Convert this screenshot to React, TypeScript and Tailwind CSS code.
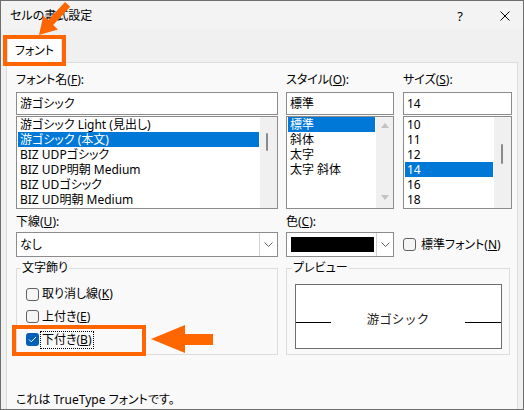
import type { ReactNode } from 'react';

const fontCls = "font-['Noto_Sans','Noto_Sans_CJK_JP',sans-serif] [font-feature-settings:'palt']";

function Chevron() {
  return (
    <svg width="9" height="5" viewBox="0 0 9 5" fill="none">
      <path d="M0.5 0.5 L4.5 4.5 L8.5 0.5" stroke="#606060" strokeWidth="1" />
    </svg>
  );
}

function ListBox({
  items,
  selected,
  bar,
}: {
  items: string[];
  selected: number;
  bar: ReactNode;
}) {
  return (
    <div className="mt-[1px] h-[93px] border border-[#8c8c8c] bg-white flex">
      <div className="flex-1 px-[1px] flex flex-col overflow-hidden">
        {items.map((t, i) => (
          <div
            key={t}
            className={`h-[15px] leading-[15px] px-[2px] whitespace-nowrap ${
              i === selected ? 'bg-[#0078d7] text-white' : ''
            }`}
          >
            {t}
          </div>
        ))}
      </div>
      {bar}
    </div>
  );
}

function CheckBox({ checked }: { checked?: boolean }) {
  if (checked) {
    return (
      <div className="w-[13px] h-[13px] rounded-[3px] bg-[#005fb8] flex items-center justify-center shrink-0">
        <svg width="9" height="7" viewBox="0 0 9 7" fill="none">
          <path d="M1 3.5 L3.3 5.8 L8 1" stroke="#ffffff" strokeWidth="1" />
        </svg>
      </div>
    );
  }
  return <div className="w-[13px] h-[13px] rounded-[3px] border border-[#616161] bg-[#f5f5f5] shrink-0" />;
}

export default function App() {
  return (
    <div
      className={`w-[524px] h-[410px] bg-[#f0f0f0] border border-[#6e6e6e] relative flex flex-col text-[12px] text-black overflow-hidden ${fontCls}`}
    >
      {/* タイトルバー */}
      <div className="h-[29px] bg-[#f3f3f3] flex items-center pl-[9px] pr-[13px]">
        <span className="leading-[16px]">セルの書式設定</span>
        <div className="ml-auto flex items-center gap-[37px]">
          <span className="leading-[16px] text-[13px]">?</span>
          <svg width="10" height="10" viewBox="0 0 10 10" fill="none">
            <path d="M0.5 0.5 L9.5 9.5 M9.5 0.5 L0.5 9.5" stroke="#000" strokeWidth="1" />
          </svg>
        </div>
      </div>

      {/* タブ */}
      <div className="h-[32px] flex items-end pl-[6px]">
        <div className="relative z-10 w-[55px] h-[25px] mb-[-1px] bg-white border-t border-l border-r border-[#e0e0e0] flex items-center justify-center leading-[16px]">
          フォント
        </div>
      </div>

      {/* パネル */}
      <div className="flex-1 ml-[5px] mr-[5px] border-t border-l border-r border-[#dcdcdc] bg-[#f9f9f9] flex flex-col pl-[9px] pt-[8px]">
        <div className="flex">
          <div className="w-[262px] mr-[8px]">
            <div className="h-[18px] leading-[18px]">
              フォント名(<span className="underline">F</span>):
            </div>
            <div className="mt-[3px] h-[23px] border border-[#8c8c8c] bg-white flex items-center pl-[3px] leading-[16px]">
              游ゴシック
            </div>
            <ListBox
              items={[
                '游ゴシック Light (見出し)',
                '游ゴシック (本文)',
                'BIZ UDPゴシック',
                'BIZ UDP明朝 Medium',
                'BIZ UDゴシック',
                'BIZ UD明朝 Medium',
              ]}
              selected={1}
              bar={
                <div className="w-[17px] bg-[#f0f0f0] relative">
                  <div className="absolute left-[6px] top-[16px] w-[2px] h-[18px] rounded-full bg-[#8a8a8a]" />
                </div>
              }
            />
          </div>

          <div className="w-[108px] mr-[9px]">
            <div className="h-[18px] leading-[18px]">
              スタイル(<span className="underline">O</span>):
            </div>
            <div className="mt-[3px] h-[23px] border border-[#8c8c8c] bg-white flex items-center pl-[3px] leading-[16px]">
              標準
            </div>
            <ListBox
              items={['標準', '斜体', '太字', '太字 斜体']}
              selected={0}
              bar={
                <div className="w-[17px] bg-[#f0f0f0] flex flex-col items-center justify-between pt-[6px] pb-[8px]">
                  <svg width="8" height="5" viewBox="0 0 8 5">
                    <path d="M0 5 L4 0 L8 5 Z" fill="#c2c2c2" />
                  </svg>
                  <svg width="8" height="5" viewBox="0 0 8 5">
                    <path d="M0 0 L4 5 L8 0 Z" fill="#c2c2c2" />
                  </svg>
                </div>
              }
            />
          </div>

          <div className="w-[109px]">
            <div className="h-[18px] leading-[18px]">
              サイズ(<span className="underline">S</span>):
            </div>
            <div className="mt-[3px] h-[23px] border border-[#8c8c8c] bg-white flex items-center pl-[3px] leading-[16px]">
              14
            </div>
            <ListBox
              items={['10', '11', '12', '14', '16', '18']}
              selected={3}
              bar={
                <div className="w-[17px] bg-[#f0f0f0] relative">
                  <div className="absolute left-[7px] top-[27px] w-[2px] h-[20px] rounded-full bg-[#8a8a8a]" />
                </div>
              }
            />
          </div>
        </div>

        {/* 下線 / 色 */}
        <div className="flex mt-[4px]">
          <div className="w-[262px] mr-[8px]">
            <div className="h-[18px] leading-[18px]">
              下線(<span className="underline">U</span>):
            </div>
            <div className="mt-[1px] h-[25px] border border-[#8c8c8c] bg-white flex">
              <div className="flex-1 flex items-center pl-[3px] leading-[16px]">なし</div>
              <div className="w-[18px] border-l border-[#d0d0d0] flex items-center justify-center">
                <Chevron />
              </div>
            </div>
          </div>
          <div className="w-[108px] mr-[9px]">
            <div className="h-[18px] leading-[18px]">
              色(<span className="underline">C</span>):
            </div>
            <div className="mt-[1px] h-[25px] border border-[#8c8c8c] bg-white flex">
              <div className="flex-1 flex items-center pl-[4px]">
                <div className="w-[83px] h-[15px] bg-black" />
              </div>
              <div className="w-[17px] border-l border-[#d0d0d0] flex items-center justify-center">
                <Chevron />
              </div>
            </div>
          </div>
          <div className="w-[109px] mt-[19px] h-[25px] flex items-center">
            <CheckBox />
            <span className="ml-[5px] leading-[16px] whitespace-nowrap">
              標準フォント(<span className="underline">N</span>)
            </span>
          </div>
        </div>

        {/* 文字飾り / プレビュー */}
        <div className="flex mt-[3px]">
          <fieldset className="w-[262px] h-[95px] mr-[8px] border border-[#dcdcdc]">
            <legend className="ml-[4px] px-[1px] h-[16px] leading-[16px]">文字飾り</legend>
            <div className="pl-[9px] pt-[7px] flex flex-col">
              <label className="h-[22px] flex items-center">
                <CheckBox />
                <span className="ml-[3px] leading-[16px]">
                  取り消し線(<span className="underline">K</span>)
                </span>
              </label>
              <label className="h-[23px] flex items-center">
                <CheckBox />
                <span className="ml-[3px] leading-[16px]">
                  上付き(<span className="underline">E</span>)
                </span>
              </label>
              <label className="h-[23px] flex items-center">
                <CheckBox checked />
                <span className="ml-[1px] px-[1px] leading-[16px] border border-dotted border-black">
                  下付き(<span className="underline">B</span>)
                </span>
              </label>
            </div>
          </fieldset>

          <fieldset className="w-[224px] h-[95px] border border-[#dcdcdc]">
            <legend className="ml-[5px] px-[1px] h-[16px] leading-[16px]">プレビュー</legend>
            <div className="ml-[8px] mt-[8px] w-[207px] h-[65px] border border-[#6e6e6e] bg-white flex items-center pt-[7px]">
              <div className="w-[35px] h-px bg-black mt-[4px]" />
              <div className="flex-1 text-center text-[12.5px] leading-[16px] text-[#222] [font-feature-settings:normal]">
                游ゴシック
              </div>
              <div className="w-[36px] h-px bg-black mt-[4px]" />
            </div>
          </fieldset>
        </div>

        <div className="mt-auto mb-[1px] h-[16px] leading-[16px]">これは TrueType フォントです。</div>
      </div>

      {/* 注釈 */}
      <div className="absolute left-[2px] top-[34px] w-[63px] h-[31px] border-[4px] border-[#ff6600] z-20" />
      <div className="absolute left-[11px] top-[324px] w-[134px] h-[31px] border-[4px] border-[#ff6600] z-20" />
      <svg
        className="absolute -left-[1px] -top-[1px] z-30 pointer-events-none"
        width="524"
        height="410"
        viewBox="0 0 524 410"
      >
        <polygon
          points="39,35 57.9,29.4 53.2,25 70.2,6.7 65,1.9 48,20.2 43.3,15.8"
          fill="#ff6600"
        />
        <polygon points="151,339 185,325 185,334 213,334 213,345 185,345 185,353" fill="#ff6600" />
      </svg>
    </div>
  );
}
